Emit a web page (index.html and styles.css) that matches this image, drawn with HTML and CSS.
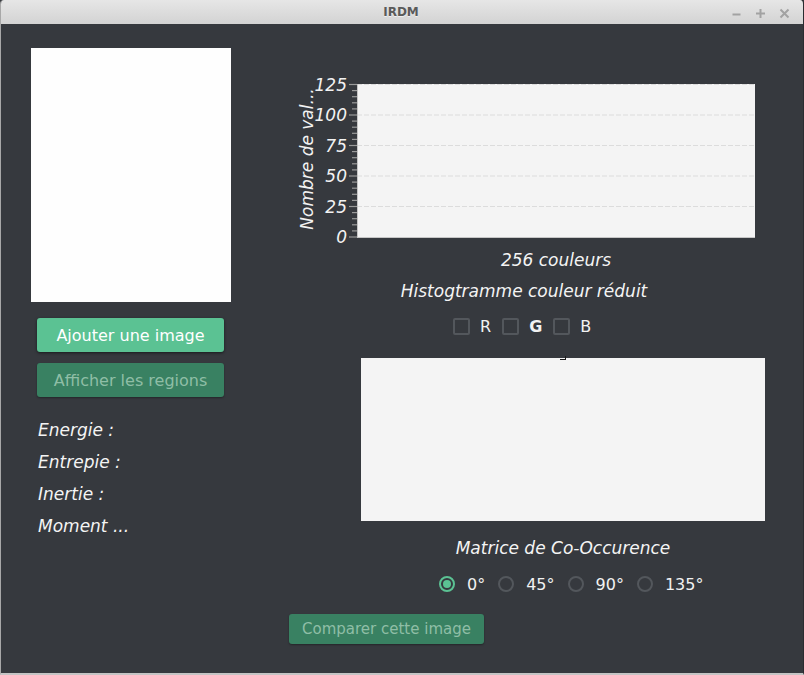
FILE: index.html
```html
<!DOCTYPE html>
<html lang="fr">
<head>
<meta charset="utf-8">
<title>IRDM</title>
<link rel="stylesheet" href="styles.css">
</head>
<body>
<div class="window">
  <div class="titlebar">
    <span class="title">IRDM</span>
    <svg class="controls" width="72" height="24" viewBox="0 0 72 24">
      <path d="M1.5 14.5h8" />
      <path d="M25 13.5h9M29.5 9v9" />
      <path d="M49.5 9.5l8 8M57.5 9.5l-8 8" />
    </svg>
  </div>
  <div class="content">
    <div class="left">
      <div class="image-box"></div>
      <button class="btn btn-primary">Ajouter une image</button>
      <button class="btn btn-disabled">Afficher les regions</button>
      <ul class="stats">
        <li>Energie :</li>
        <li>Entrepie :</li>
        <li>Inertie :</li>
        <li>Moment ...</li>
      </ul>
    </div>
    <div class="right">
      <svg class="chart" width="470" height="170" viewBox="0 0 470 170">
        <rect class="plot" x="68" y="8" width="398" height="154" />
        <g class="grid">
          <line x1="68" y1="8.5" x2="466" y2="8.5" />
          <line x1="68" y1="39" x2="466" y2="39" />
          <line x1="68" y1="69.5" x2="466" y2="69.5" />
          <line x1="68" y1="100" x2="466" y2="100" />
          <line x1="68" y1="130.5" x2="466" y2="130.5" />
        </g>
        <line class="axis" x1="68" y1="161.5" x2="466" y2="161.5" />
        <line class="axis" x1="68.5" y1="8" x2="68.5" y2="162" />
        <g class="ticks major">
          <line x1="60" y1="8.5" x2="68" y2="8.5" />
          <line x1="60" y1="39" x2="68" y2="39" />
          <line x1="60" y1="69.5" x2="68" y2="69.5" />
          <line x1="60" y1="100" x2="68" y2="100" />
          <line x1="60" y1="130.5" x2="68" y2="130.5" />
          <line x1="60" y1="161" x2="68" y2="161" />
        </g>
        <g class="ticks minor">
          <line x1="63" y1="14.6" x2="68" y2="14.6" />
          <line x1="63" y1="20.7" x2="68" y2="20.7" />
          <line x1="63" y1="26.8" x2="68" y2="26.8" />
          <line x1="63" y1="32.9" x2="68" y2="32.9" />
          <line x1="63" y1="45.1" x2="68" y2="45.1" />
          <line x1="63" y1="51.2" x2="68" y2="51.2" />
          <line x1="63" y1="57.3" x2="68" y2="57.3" />
          <line x1="63" y1="63.4" x2="68" y2="63.4" />
          <line x1="63" y1="75.6" x2="68" y2="75.6" />
          <line x1="63" y1="81.7" x2="68" y2="81.7" />
          <line x1="63" y1="87.8" x2="68" y2="87.8" />
          <line x1="63" y1="93.9" x2="68" y2="93.9" />
          <line x1="63" y1="106.1" x2="68" y2="106.1" />
          <line x1="63" y1="112.2" x2="68" y2="112.2" />
          <line x1="63" y1="118.3" x2="68" y2="118.3" />
          <line x1="63" y1="124.4" x2="68" y2="124.4" />
          <line x1="63" y1="136.6" x2="68" y2="136.6" />
          <line x1="63" y1="142.7" x2="68" y2="142.7" />
          <line x1="63" y1="148.8" x2="68" y2="148.8" />
          <line x1="63" y1="154.9" x2="68" y2="154.9" />
        </g>
        <g class="tick-labels">
          <text x="58" y="14.5">125</text>
          <text x="58" y="45">100</text>
          <text x="58" y="75.5">75</text>
          <text x="58" y="106">50</text>
          <text x="58" y="136.5">25</text>
          <text x="58" y="167">0</text>
        </g>
        <text class="y-label" transform="translate(24 83) rotate(-90)">Nombre de val...</text>
      </svg>
      <div class="x-label">256 couleurs</div>
      <div class="chart-title">Histogtramme couleur réduit</div>
      <div class="channels">
        <label class="check"><span class="box"></span><span class="check-text">R</span></label>
        <label class="check"><span class="box"></span><span class="check-text bold">G</span></label>
        <label class="check"><span class="box"></span><span class="check-text">B</span></label>
      </div>
      <div class="matrix"><span class="corner"></span></div>
      <div class="matrix-title">Matrice de Co-Occurence</div>
      <div class="angles">
        <label class="radio"><span class="dot selected"></span><span>0°</span></label>
        <label class="radio"><span class="dot"></span><span>45°</span></label>
        <label class="radio"><span class="dot"></span><span>90°</span></label>
        <label class="radio"><span class="dot"></span><span>135°</span></label>
      </div>
      <button class="btn btn-disabled btn-compare">Comparer cette image</button>
    </div>
  </div>
</div>
</body>
</html>
```

FILE: styles.css
```css
* { box-sizing: border-box; }

html, body {
  margin: 0;
  padding: 0;
  background: #36393e;
}

body {
  font-family: "DejaVu Sans", "Noto Sans", sans-serif;
  color: #f0f0f0;
}

.window {
  width: 804px;
  height: 675px;
  background: #36393e;
  border-left: 1px solid #a8a8a8;
  border-right: 1px solid #2a2c30;
  border-bottom: 2px solid #c4c4c4;
  border-radius: 4px 4px 0 0;
  overflow: hidden;
}

.titlebar {
  height: 24px;
  display: flex;
  align-items: center;
  background: linear-gradient(#e6e6e6, #d3d3d3);
}

.title {
  flex: 1;
  padding-left: 70px;
  text-align: center;
  font-family: "DejaVu Sans", sans-serif;
  font-weight: bold;
  font-size: 12px;
  color: #5a5a5a;
  text-shadow: 0 1px 0 rgba(255,255,255,0.6);
}

.controls {
  flex: none;
  display: block;
}

.controls path {
  fill: none;
  stroke: #a2a2a2;
  stroke-width: 2;
}

.content {
  display: flex;
  align-items: flex-start;
  padding-left: 30px;
  padding-top: 24px;
}

.left {
  width: 200px;
  display: flex;
  flex-direction: column;
  align-items: flex-start;
}

.image-box {
  width: 200px;
  height: 254px;
  background: #fefefe;
}

.btn {
  font-family: "DejaVu Sans", sans-serif;
  font-size: 16px;
  border: none;
  border-radius: 3px;
  padding: 0;
  width: 187px;
  height: 34px;
  margin-left: 6px;
  cursor: default;
}

.btn-primary {
  margin-top: 16px;
  background: #5bc293;
  color: #ffffff;
  box-shadow: 0 1px 3px rgba(0,0,0,0.55);
}

.btn-disabled {
  background: #398162;
  color: #8fbea6;
  box-shadow: 0 1px 2px rgba(0,0,0,0.35);
}

.left .btn-disabled {
  margin-top: 11px;
}

.stats {
  list-style: none;
  margin: 17px 0 0 7px;
  padding: 0;
}

.stats li {
  font-style: italic;
  font-size: 17px;
  line-height: 32px;
  height: 32px;
  color: #f4f4f4;
}

.right {
  margin-left: 58px;
  width: 480px;
  display: flex;
  flex-direction: column;
  align-items: flex-start;
}

.chart {
  display: block;
  margin-top: 28px;
  overflow: visible;
}

.plot { fill: #f4f4f4; }

.grid line {
  stroke: #dcdcdc;
  stroke-width: 1;
  stroke-dasharray: 5 2;
}

.axis {
  stroke: #c6c6c6;
  stroke-width: 1;
}

.ticks line {
  stroke: #9a9a9a;
  stroke-width: 1.2;
}

.tick-labels text,
.y-label {
  font-family: "DejaVu Sans", sans-serif;
  font-style: italic;
  font-size: 17px;
  fill: #f2f2f2;
}

.tick-labels text { text-anchor: end; }

.y-label { text-anchor: middle; }

.x-label,
.chart-title,
.matrix-title {
  font-style: italic;
  font-size: 17px;
  line-height: 20px;
  height: 20px;
  text-align: center;
  color: #f4f4f4;
  white-space: nowrap;
}

.x-label {
  margin-top: 4px;
  margin-left: 68px;
  width: 398px;
}

.chart-title {
  margin-top: 11px;
  width: 470px;
}

.channels {
  margin-top: 17px;
  margin-left: 164px;
  display: flex;
  align-items: center;
  gap: 11px;
  height: 17px;
}

.check {
  display: flex;
  align-items: center;
  gap: 10px;
  font-size: 16px;
  color: #f2f2f2;
}

.box {
  width: 17px;
  height: 17px;
  border: 2px solid #53575c;
  border-radius: 2px;
}

.bold { font-weight: bold; }

.matrix {
  position: relative;
  margin-top: 23px;
  margin-left: 72px;
  width: 404px;
  height: 163px;
  background: #f4f4f4;
}

.corner {
  position: absolute;
  left: 199px;
  top: -2px;
  width: 6px;
  height: 4px;
  border-right: 1.5px solid #1c1c1c;
  border-bottom: 1.5px solid #1c1c1c;
}

.matrix-title {
  margin-top: 17px;
  margin-left: 72px;
  width: 404px;
}

.angles {
  margin-top: 18px;
  margin-left: 150px;
  display: flex;
  align-items: center;
  gap: 13px;
  height: 16px;
}

.radio {
  display: flex;
  align-items: center;
  gap: 12px;
  font-size: 16px;
  color: #f2f2f2;
}

.dot {
  width: 16px;
  height: 16px;
  border-radius: 50%;
  border: 2px solid #53575c;
  position: relative;
}

.dot.selected {
  border-color: #5bc293;
}

.dot.selected::after {
  content: "";
  position: absolute;
  left: 2px;
  top: 2px;
  width: 8px;
  height: 8px;
  border-radius: 50%;
  background: #5bc293;
}

.btn-compare {
  margin-top: 22px;
  margin-left: 0;
  width: 195px;
  height: 30px;
  font-size: 15px;
}
```
